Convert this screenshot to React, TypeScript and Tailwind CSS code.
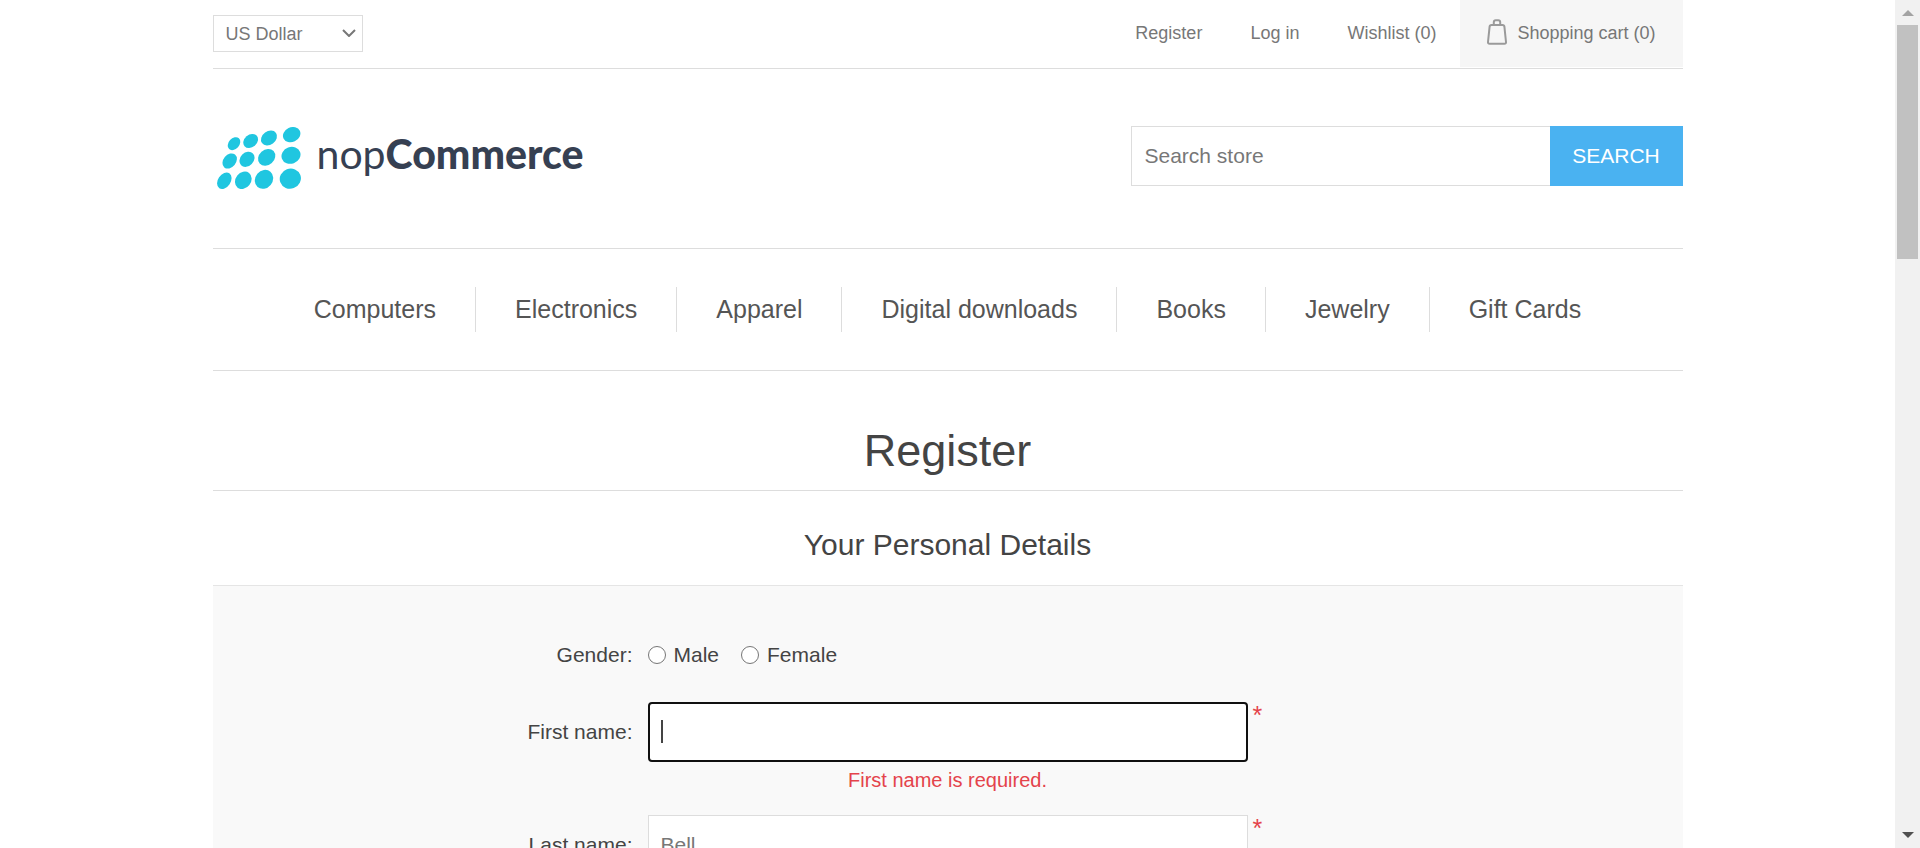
import React from "react";

type Dot = { cx: number; cy: number; rx: number; ry: number; angle: number };

const logoDots: Dot[] = [
  { cx: 102, cy: 431, rx: 22, ry: 16, angle: -48 },
  { cx: 152, cy: 423, rx: 24, ry: 19, angle: -40 },
  { cx: 207, cy: 414, rx: 26, ry: 20, angle: -36 },
  { cx: 275, cy: 404, rx: 27, ry: 22, angle: -25 },
  { cx: 89, cy: 483, rx: 25, ry: 19, angle: -50 },
  { cx: 141, cy: 478, rx: 25, ry: 20, angle: -45 },
  { cx: 200, cy: 472, rx: 28, ry: 23, angle: -42 },
  { cx: 273, cy: 466, rx: 29, ry: 25, angle: -20 },
  { cx: 73, cy: 542, rx: 27, ry: 19, angle: -56 },
  { cx: 130, cy: 541, rx: 28, ry: 23, angle: -52 },
  { cx: 192, cy: 538, rx: 30, ry: 26, angle: -50 },
  { cx: 271, cy: 536, rx: 32, ry: 30, angle: -20 },
];

const categories = [
  "Computers",
  "Electronics",
  "Apparel",
  "Digital downloads",
  "Books",
  "Jewelry",
  "Gift Cards",
];

function BagIcon() {
  return (
    <svg viewBox="0 0 20 26" className="h-[26px] w-5" fill="none" stroke="#9a9a9a" strokeWidth="2" aria-hidden="true">
      <path d="M4.500 6h11c1.100 0 1.800.6 1.900 1.700L19 23c.1 1.100-.5 1.800-1.600 1.800H2.600C1.500 24.800.9 24.100 1 23L2.600 7.700C2.700 6.600 3.400 6 4.500 6Z" />
      <path d="M6.800 6V3.200C6.800 1.900 7.500 1.200 8.800 1.200h2.400c1.300 0 2 .7 2 2V6" />
    </svg>
  );
}

function TopBar() {
  return (
    <div className="flex h-[69px] items-start justify-between border-b border-[#ddd]">
      <div className="relative mt-[15px] w-[150px]">
        <select
          aria-label="Currency"
          className="h-[37px] w-full appearance-none border border-[#ddd] bg-white px-3 text-lg/6 text-[#777]"
        >
          <option>US Dollar</option>
        </select>
        <svg
          viewBox="0 0 14 8"
          className="pointer-events-none absolute top-[14px] right-[7px] h-2 w-[14px]"
          fill="none"
          stroke="#777"
          strokeWidth="2"
          aria-hidden="true"
        >
          <path d="M1 1l6 6 6-6" />
        </svg>
      </div>
      <div className="flex h-[67px] text-lg/[66px] text-[#777]">
        <a href="#register" className="px-6">Register</a>
        <a href="#login" className="px-6">Log in</a>
        <a href="#wishlist" className="px-6">Wishlist (0)</a>
        <a href="#cart" className="flex gap-[10px] bg-[#f6f6f6] px-[27px]">
          <span className="pt-[19px]"><BagIcon /></span>
          Shopping cart (0)
        </a>
      </div>
    </div>
  );
}

function Logo() {
  return (
    <a href="#home" className="flex items-center gap-4 pt-px pl-1" aria-label="nopCommerce">
      <svg viewBox="51 381 252 186" className="h-[62px] w-[84px]" fill="#20c6e0" aria-hidden="true">
        {logoDots.map((d) => (
          <ellipse
            key={`${d.cx}-${d.cy}`}
            cx={d.cx}
            cy={d.cy}
            rx={d.rx}
            ry={d.ry}
            transform={`rotate(${d.angle} ${d.cx} ${d.cy})`}
          />
        ))}
      </svg>
      <span className="pb-2 font-['Lato','Open_Sans',sans-serif] text-[41px]/[50px] text-[#364052]">
        nop<span className="font-black">Commerce</span>
      </span>
    </a>
  );
}

function Required() {
  return <span className="pl-[5px] text-[25px]/[26px] text-[#e4434b]">*</span>;
}

export default function App() {
  return (
    <div className="flex h-screen overflow-hidden bg-white font-['Liberation_Sans',Arial,sans-serif] text-[21px]/6 text-[#444]">
      <div className="min-w-0 flex-1 overflow-hidden">
        <div className="mx-auto max-w-[1470px]">
          <header>
            <TopBar />
            <div className="flex items-start justify-between pt-[57px] pb-[59px]">
              <Logo />
              <form className="flex h-[60px] w-[552px]" onSubmit={(e) => e.preventDefault()}>
                <input
                  type="text"
                  aria-label="Search store"
                  placeholder="Search store"
                  className="min-w-0 flex-1 border border-r-0 border-[#ddd] px-[13px] text-[#777] placeholder:text-[#777]"
                />
                <button type="submit" className="w-[133px] bg-[#4ab2f1] text-white">SEARCH</button>
              </form>
            </div>
          </header>

          <nav className="border-y border-[#ddd] py-[38px]">
            <ul className="flex justify-center text-[25px]/[45px] text-[#555]">
              {categories.map((c) => (
                <li key={c} className="border-l border-[#ddd] px-[39px] first:border-l-0">
                  <a href="#category">{c}</a>
                </li>
              ))}
            </ul>
          </nav>

          <main className="text-center">
            <h1 className="border-b border-[#ddd] pt-[53px] pb-3 text-[45px]/[54px]">Register</h1>
            <h2 className="pt-[36px] pb-[22px] text-[30px]/9">Your Personal Details</h2>
            <form className="border-t border-[#e5e5e5] bg-[#f9f9f9] pt-[57px] pb-12" onSubmit={(e) => e.preventDefault()}>
              <div className="grid grid-cols-[1fr_600px_1fr] text-left">
                <span id="gender" className="pr-[15px] text-right">Gender:</span>
                <div role="radiogroup" aria-labelledby="gender" className="flex gap-[22px]">
                  {["Male", "Female"].map((g) => (
                    <label key={g} className="flex items-center gap-2">
                      <input
                        type="radio"
                        name="gender"
                        className="size-[18px] appearance-none rounded-full border border-[#767676] bg-white checked:border-4"
                      />
                      {g}
                    </label>
                  ))}
                </div>
                <span />

                <label htmlFor="first" className="mt-[35px] pr-[15px] text-right leading-[60px]">First name:</label>
                <div className="mt-[35px]">
                  <div className="relative">
                    <input
                      id="first"
                      type="text"
                      autoFocus
                      className="block h-[60px] w-full rounded-[4px] border-2 border-[#101010] bg-white px-3 caret-transparent outline-none"
                    />
                    <span className="absolute top-[18px] left-[13px] h-[23px] w-[2px] bg-[#444]" />
                  </div>
                  <p className="pt-[6px] text-center text-[20px]/6 text-[#e4434b]">First name is required.</p>
                </div>
                <span className="pt-[35px]"><Required /></span>

                <label htmlFor="last" className="mt-[23px] pr-[15px] text-right leading-[60px]">Last name:</label>
                <input
                  id="last"
                  type="text"
                  placeholder="Bell"
                  className="mt-[23px] h-[60px] w-full border border-[#ddd] bg-white px-3 placeholder:text-[#777]"
                />
                <span className="pt-[23px]"><Required /></span>
              </div>
            </form>
          </main>
        </div>
      </div>

      <aside className="flex w-[25px] flex-col items-center justify-between bg-[#f1f1f1]" aria-hidden="true">
        <div className="flex flex-col items-center gap-[9px] pt-[10px]">
          <svg viewBox="0 0 12 6" className="h-[6px] w-3" fill="#a3a3a3"><path d="M0 6l6-6 6 6z" /></svg>
          <div className="h-[234px] w-[21px] bg-[#c1c1c1]" />
        </div>
        <svg viewBox="0 0 12 6" className="mb-[10px] h-[6px] w-3" fill="#505050"><path d="M0 0l6 6 6-6z" /></svg>
      </aside>
    </div>
  );
}
